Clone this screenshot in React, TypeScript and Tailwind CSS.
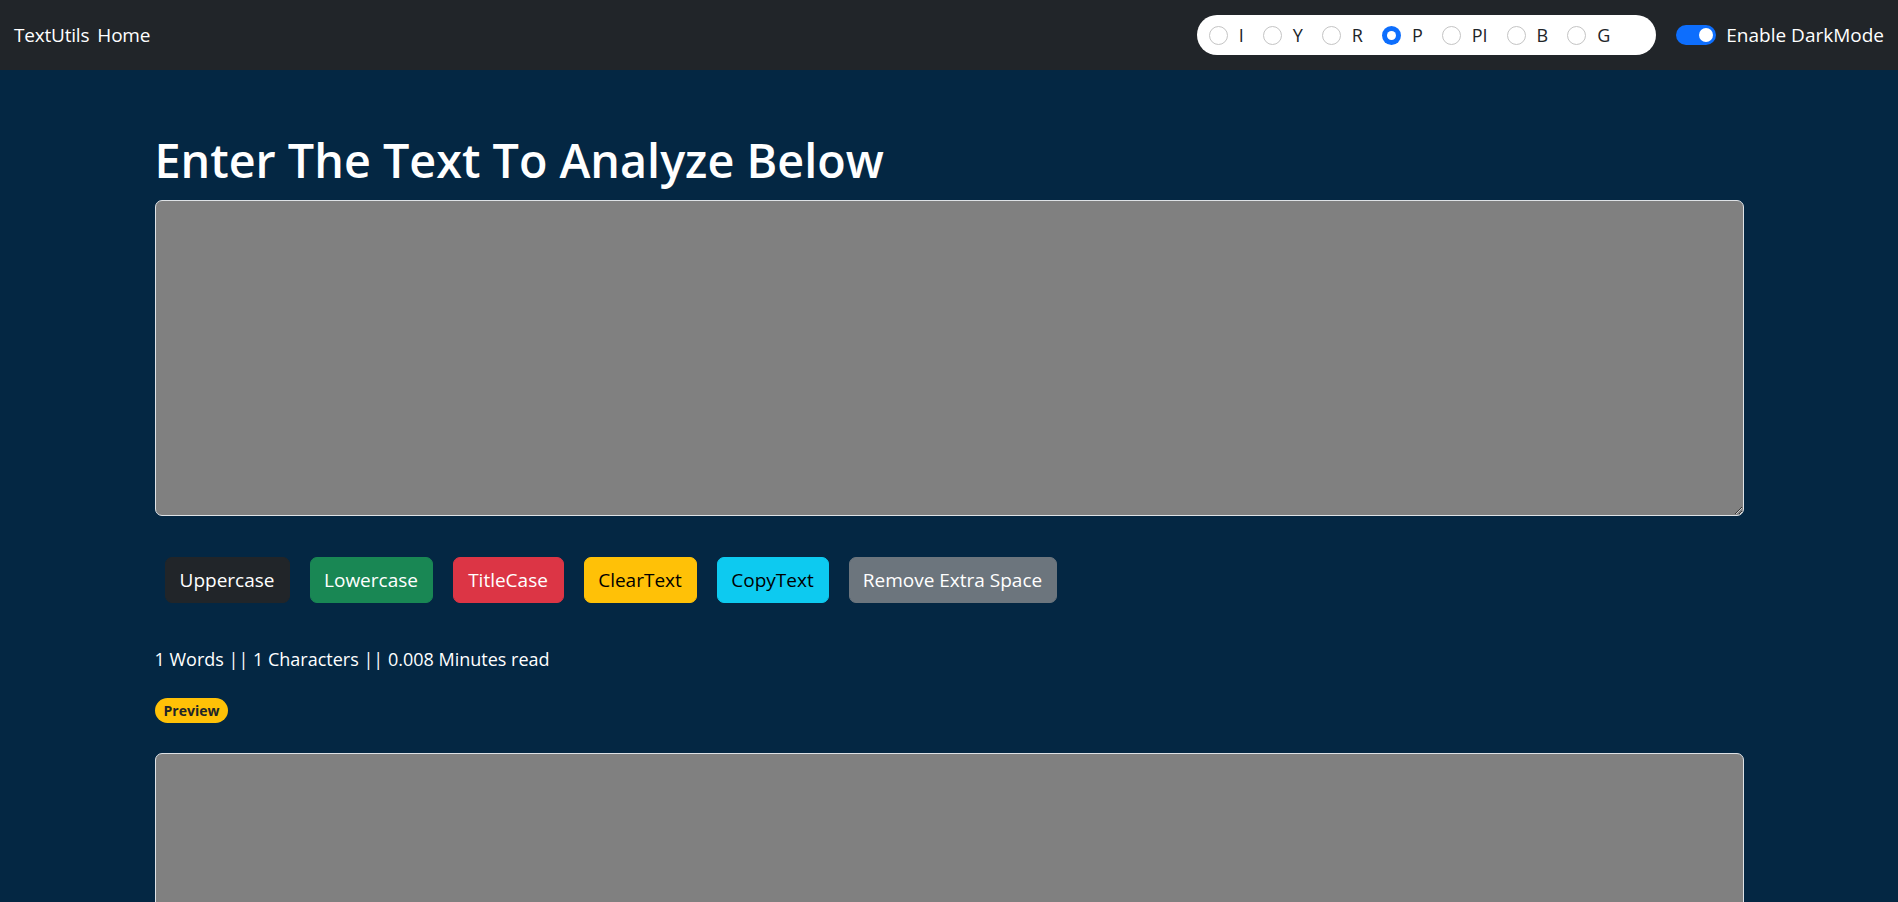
import React from "react";

const themes = ["I", "Y", "R", "P", "PI", "B", "G"];

const buttons = [
  { label: "Uppercase", cls: "w-[125px] bg-[#212529] border-[#212529] text-white" },
  { label: "Lowercase", cls: "w-[123px] bg-[#198754] border-[#198754] text-white" },
  { label: "TitleCase", cls: "w-[111px] bg-[#dc3545] border-[#dc3545] text-white" },
  { label: "ClearText", cls: "w-[113px] bg-[#ffc107] border-[#ffc107] text-black" },
  { label: "CopyText", cls: "w-[112px] bg-[#0dcaf0] border-[#0dcaf0] text-black" },
  { label: "Remove Extra Space", cls: "w-[208px] bg-[#6c757d] border-[#6c757d] text-white" },
];

export default function App() {
  const font = { fontFamily: '"Open Sans", "Noto Sans", sans-serif' };
  return (
    <div className="min-h-screen bg-[#042743] text-white" style={font}>
      <nav className="h-[70px] bg-[#212529] flex items-center justify-between px-[14px]">
        <div className="flex items-center gap-[8px] text-[19px] tracking-[-0.2px]">
          <a className="text-white">TextUtils</a>
          <a className="text-white">Home</a>
        </div>
        <div className="flex items-center">
          <div className="h-[40px] bg-white rounded-full flex items-center gap-[19px] pl-[12px] pr-[46px] text-[#212529] text-[18px]">
            {themes.map((t) => (
              <label key={t} className="flex items-center">
                <span
                  className={`w-[19px] h-[19px] rounded-full mr-[11px] flex items-center justify-center ${
                    t === "P" ? "bg-[#0d6efd]" : "border border-[#c4c4c4] bg-white"
                  }`}
                >
                  {t === "P" && <span className="w-[9px] h-[9px] rounded-full bg-white" />}
                </span>
                {t}
              </label>
            ))}
          </div>
          <div className="flex items-center ml-[20px]">
            <span className="w-[40px] h-[20px] rounded-full bg-[#0d6efd] flex items-center justify-end pr-[3px]">
              <span className="w-[14px] h-[14px] rounded-full bg-white" />
            </span>
            <span className="ml-[10px] text-[19px]">Enable DarkMode</span>
          </div>
        </div>
      </nav>

      <div className="w-[1589px] mx-auto pt-[61px]">
        <h1 className="text-[46.7px] font-semibold leading-[58px] mb-[11px]">
          Enter The Text To Analyze Below
        </h1>
        <textarea
          className="block w-full h-[316px] bg-[#808080] text-white border border-[#dee2e6] rounded-[7px] px-[14px] py-[8px] text-[19px] outline-none"
          defaultValue=""
        />
        <div className="flex gap-[20px] pl-[10px] mt-[41px]">
          {buttons.map((b) => (
            <button
              key={b.label}
              className={`h-[46px] rounded-[7px] border text-[19px] text-center ${b.cls}`}
            >
              {b.label}
            </button>
          ))}
        </div>

        <p className="mt-[42px] text-[18px] leading-[29px] tracking-[0px]">
          1 Words || 1 Characters || 0.008 Minutes read
        </p>
        <div className="mt-[24px]">
          <span className="inline-flex items-center h-[25px] px-[9px] rounded-full bg-[#ffc107] text-[#212529] text-[14px] font-bold">
            Preview
          </span>
        </div>
        <textarea
          className="block w-full h-[316px] mt-[30px] bg-[#808080] text-white border border-[#dee2e6] rounded-[7px] px-[14px] py-[8px] text-[19px] outline-none"
          defaultValue=""
        />
      </div>
    </div>
  );
}
